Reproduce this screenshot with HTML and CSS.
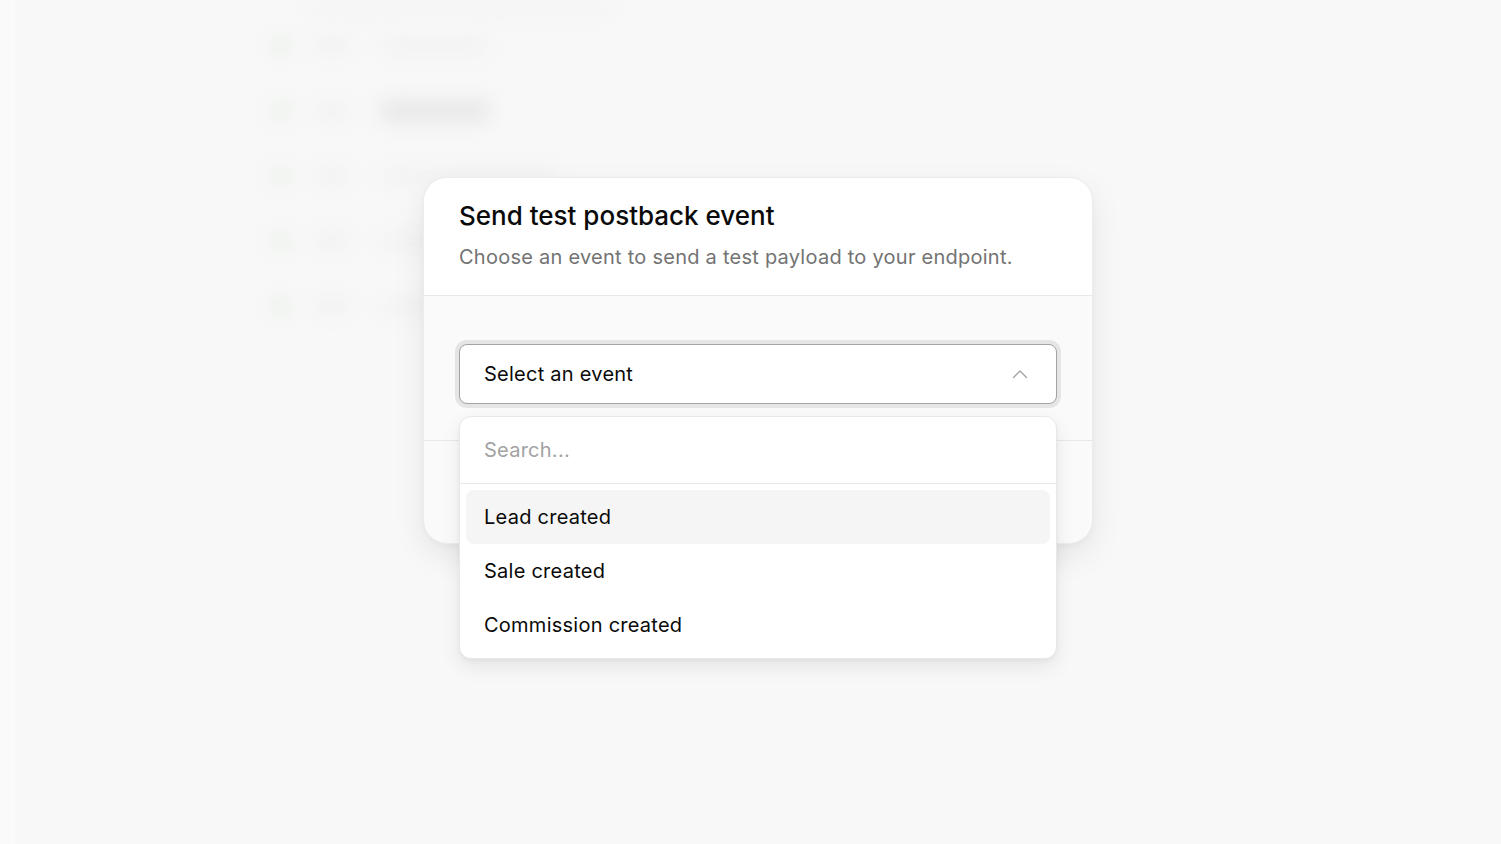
FILE: index.html
```html
<!DOCTYPE html>
<html lang="en">
<head>
<meta charset="utf-8">
<title>Send test postback event</title>
<link rel="stylesheet" href="styles.css">
</head>
<body>
  <aside class="sidebar"></aside>
  <main class="main">
    <div class="backdrop-content">
      <div class="bg-top"></div>
      <div class="bg-row"><span class="bg-dot"></span><span class="bg-text"></span><span class="bg-pill"></span></div>
      <div class="bg-row"><span class="bg-dot"></span><span class="bg-text"></span><span class="bg-pill dark"></span></div>
      <div class="bg-row"><span class="bg-dot"></span><span class="bg-text"></span><span class="bg-pill wide"></span></div>
      <div class="bg-row"><span class="bg-dot"></span><span class="bg-text"></span><span class="bg-pill"></span></div>
      <div class="bg-row"><span class="bg-dot"></span><span class="bg-text"></span><span class="bg-pill"></span></div>
    </div>

    <div class="overlay">
      <section class="modal">
        <header class="modal-header">
          <h2 class="modal-title">Send test postback event</h2>
          <p class="modal-desc">Choose an event to send a test payload to your endpoint.</p>
        </header>
        <div class="modal-body">
          <div class="select-wrap">
            <button class="select" type="button">
              <span class="select-value">Select an event</span>
              <svg class="chevron" width="16" height="16" viewBox="0 0 16 16" fill="none" stroke="currentColor" stroke-width="1.4" stroke-linecap="round" stroke-linejoin="round"><path d="M1.5 11.5 L8 5 L14.5 11.5"/></svg>
            </button>
            <div class="dropdown">
              <div class="search">Search...</div>
              <ul class="options">
                <li class="option active">Lead created</li>
                <li class="option">Sale created</li>
                <li class="option">Commission created</li>
              </ul>
            </div>
          </div>
        </div>
        <footer class="modal-footer">
          <button class="btn btn-secondary" type="button">Cancel</button>
          <button class="btn btn-primary" type="button">Send test</button>
        </footer>
      </section>
    </div>
  </main>
</body>
</html>
```

FILE: styles.css
```css
* { box-sizing: border-box; }

html, body {
  margin: 0;
  height: 100%;
}

body {
  display: flex;
  background: #f9f9f9;
  font-family: Inter, "Noto Sans", "Liberation Sans", sans-serif;
  color: #0a0a0a;
  overflow: hidden;
}

.sidebar {
  width: 15px;
  flex: none;
  background: #fafafa;
  box-shadow: 1px 0 6px rgba(0,0,0,0.03);
}

.main {
  flex: 1;
  position: relative;
  background: #f8f8f8;
}

/* blurred page content behind the modal */
.backdrop-content {
  padding: 5px 0 0 255px;
  display: flex;
  flex-direction: column;
  filter: blur(10px);
  opacity: 0.5;
}

.bg-top {
  width: 300px;
  height: 8px;
  margin-left: 40px;
  background: #e8e8e8;
  border-radius: 6px;
}

.bg-row {
  display: flex;
  align-items: center;
  height: 65px;
}

.bg-dot {
  width: 22px;
  height: 22px;
  border-radius: 50%;
  background: #dfeadf;
}

.bg-text {
  width: 40px;
  height: 12px;
  margin-left: 20px;
  background: #e6e6e6;
  border-radius: 6px;
}

.bg-pill {
  width: 110px;
  height: 16px;
  margin-left: 28px;
  border-radius: 8px;
  background: #ebebeb;
}

.bg-pill.dark { background: #d6d6d6; height: 22px; }
.bg-pill.wide { width: 180px; }

.overlay {
  position: absolute;
  inset: 0;
  display: flex;
  justify-content: center;
  align-items: flex-start;
  padding-top: 177px;
}

.modal {
  width: 670px;
  background: #fafafa;
  border: 1px solid #ececec;
  border-radius: 24px;
  box-shadow: 0 12px 32px rgba(0,0,0,0.08), 0 2px 6px rgba(0,0,0,0.03);
}

.modal-header {
  background: #fff;
  border-radius: 23px 23px 0 0;
  padding: 22px 35px 24px;
  border-bottom: 1px solid #e8e8e8;
}

.modal-title {
  margin: 0;
  font-size: 26px;
  line-height: 32px;
  font-weight: 500;
  letter-spacing: 0;
  color: #0a0a0a;
}

.modal-desc {
  margin: 11px 0 0;
  font-size: 20px;
  line-height: 28px;
  letter-spacing: 0.25px;
  color: #737373;
}

.modal-body {
  padding: 48px 35px 36px;
  border-bottom: 1px solid #e8e8e8;
}

.select-wrap {
  position: relative;
}

.select {
  width: 100%;
  height: 60px;
  display: flex;
  align-items: center;
  justify-content: space-between;
  padding: 0 28px 0 24px;
  background: #fff;
  border: 1px solid #a3a3a3;
  border-radius: 8px;
  box-shadow: 0 0 0 4px #e5e5e5;
  font: inherit;
  font-size: 20px;
  letter-spacing: 0.25px;
  color: #0a0a0a;
  text-align: left;
}

.chevron {
  color: #a3a3a3;
}

.dropdown {
  position: absolute;
  top: 72px;
  left: 0;
  right: 0;
  z-index: 10;
  background: #fff;
  border: 1px solid #e8e8e8;
  border-radius: 12px;
  box-shadow: 0 8px 20px rgba(0,0,0,0.08), 0 2px 4px rgba(0,0,0,0.04);
}

.search {
  height: 67px;
  padding: 0 24px;
  display: flex;
  align-items: center;
  font-size: 20px;
  letter-spacing: 0.25px;
  color: #a3a3a3;
  border-bottom: 1px solid #e8e8e8;
}

.options {
  list-style: none;
  margin: 0;
  padding: 6px;
}

.option {
  height: 54px;
  display: flex;
  align-items: center;
  padding: 0 18px;
  border-radius: 8px;
  font-size: 20px;
  letter-spacing: 0.25px;
  color: #0a0a0a;
}

.option.active {
  background: #f5f5f5;
}

.modal-footer {
  height: 102px;
  padding: 0 35px;
  display: flex;
  justify-content: flex-end;
  align-items: center;
  gap: 12px;
}

.btn {
  height: 44px;
  padding: 0 20px;
  border-radius: 8px;
  font: inherit;
  font-size: 17px;
}

.btn-secondary {
  background: #fff;
  border: 1px solid #e5e5e5;
}

.btn-primary {
  background: #0a0a0a;
  color: #fff;
  border: 1px solid #0a0a0a;
}
```
